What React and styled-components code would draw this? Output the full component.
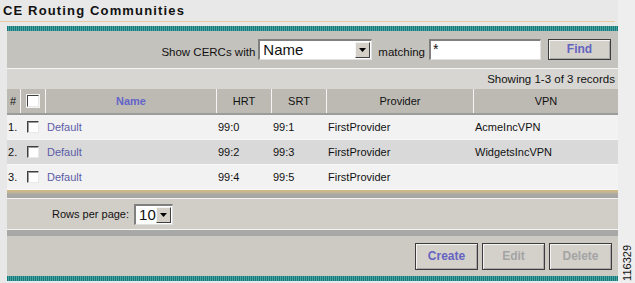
import styled, { createGlobalStyle } from "styled-components";

const GlobalStyle = createGlobalStyle`
  html, body {
    margin: 0;
    padding: 0;
    background: #e8e8e8;
  }
  body {
    font-family: "Liberation Sans", Arial, sans-serif;
    font-size: 11px;
    color: #000;
  }
`;

const rows = [
  { id: 1, name: "Default", hrt: "99:0", srt: "99:1", provider: "FirstProvider", vpn: "AcmeIncVPN" },
  { id: 2, name: "Default", hrt: "99:2", srt: "99:3", provider: "FirstProvider", vpn: "WidgetsIncVPN" },
  { id: 3, name: "Default", hrt: "99:4", srt: "99:5", provider: "FirstProvider", vpn: "" },
];

const columns = "13px 24px 170px 54px 54px 146px 144px";

function App() {
  return (
    <>
      <GlobalStyle />
      <Page>
        <Main>
          <TitleBar>
            <h1>CE Routing Communities</h1>
          </TitleBar>
          <Panel>
            <TealBar />
            <FilterRow>
              <span>Show CERCs with</span>
              <FakeSelect $width={114} $size={15}>
                <span>Name</span>
                <ArrowButton />
              </FakeSelect>
              <span className="matching">matching</span>
              <TextBox>*</TextBox>
              <Button $tone="primary" $width={63} $height={21}>
                Find
              </Button>
            </FilterRow>
            <InfoRow>Showing 1-3 of 3 records</InfoRow>
            <HeaderRow>
              <HeadCell>#</HeadCell>
              <HeadCell $center>
                <CheckBox $header />
              </HeadCell>
              <HeadCell $center $link>
                Name
              </HeadCell>
              <HeadCell $center>HRT</HeadCell>
              <HeadCell $center>SRT</HeadCell>
              <HeadCell $center>Provider</HeadCell>
              <HeadCell $center>VPN</HeadCell>
            </HeaderRow>
            {rows.map((r, i) => (
              <DataRow key={r.id} $alt={i % 2 === 1}>
                <Cell>{r.id}.</Cell>
                <Cell $center>
                  <CheckBox />
                </Cell>
                <Cell>
                  <NameLink>{r.name}</NameLink>
                </Cell>
                <Cell>{r.hrt}</Cell>
                <Cell>{r.srt}</Cell>
                <Cell>{r.provider}</Cell>
                <Cell>{r.vpn}</Cell>
              </DataRow>
            ))}
            <TanBar />
            <PagingRow>
              <span>Rows per page:</span>
              <FakeSelect $width={39} $size={15}>
                <span>10</span>
                <ArrowButton />
              </FakeSelect>
            </PagingRow>
            <GrayBar />
            <ActionRow>
              <Button $tone="primary" $width={63} $height={27}>
                Create
              </Button>
              <Button $width={63} $height={27}>
                Edit
              </Button>
              <Button $width={63} $height={27}>
                Delete
              </Button>
            </ActionRow>
            <TealBar />
          </Panel>
        </Main>
        <Side>
          <FigureNumber>116329</FigureNumber>
        </Side>
      </Page>
    </>
  );
}

function ArrowButton() {
  return (
    <Arrow>
      <svg width="7" height="4" viewBox="0 0 7 4">
        <path d="M0 0h7L3.5 4z" fill="#000" />
      </svg>
    </Arrow>
  );
}

const Page = styled.div`
  display: flex;
  width: 635px;
  height: 283px;
  overflow: hidden;
`;

const Main = styled.div`
  width: 618px;
  display: flex;
  flex-direction: column;
`;

const TitleBar = styled.div`
  height: 21px;
  border-bottom: 1px solid #e8c9a0;
  margin-bottom: 4px;
  width: 615px;
  h1 {
    margin: 0;
    padding: 3px 0 0 3px;
    font-family: "Liberation Sans", Arial, sans-serif;
    font-size: 13px;
    font-weight: bold;
    letter-spacing: 1.15px;
    line-height: 16px;
    color: #111;
  }
`;

const Panel = styled.div`
  margin-left: 7px;
  width: 611px;
  display: flex;
  flex-direction: column;
  background: #d3d0ca;
`;

const TealBar = styled.div`
  height: 5px;
  background: repeating-linear-gradient(
    90deg,
    #16797b 0px,
    #16797b 1px,
    #4aa3a3 1px,
    #4aa3a3 2px
  );
`;

const FilterRow = styled.div`
  height: 36px;
  background: #c4c2bd;
  border-bottom: 1px solid #f4f4f4;
  display: flex;
  align-items: center;
  justify-content: flex-end;
  padding: 0 7px 1px 0;
  font-size: 11.5px;
  color: #111;
  & > span {
    padding-top: 5px;
  }
  & > span:first-child {
    margin-right: 3px;
  }
  .matching {
    margin: 0 4px 0 6px;
  }
`;

const FakeSelect = styled.div`
  width: ${(p) => p.$width}px;
  height: 21px;
  box-sizing: border-box;
  background: #fff;
  border-top: 2px solid #808080;
  border-left: 2px solid #808080;
  border-right: 1px solid #e0e0e0;
  border-bottom: 1px solid #e0e0e0;
  display: flex;
  align-items: center;
  justify-content: space-between;
  font-size: ${(p) => p.$size}px;
  padding-left: 3px;
  & > span {
    line-height: 16px;
  }
`;

const Arrow = styled.div`
  width: 15px;
  height: 16px;
  margin-right: 1px;
  box-sizing: border-box;
  background: #d4d0c8;
  border-top: 1px solid #f4f4f4;
  border-left: 1px solid #f4f4f4;
  border-right: 1px solid #404040;
  border-bottom: 1px solid #404040;
  display: flex;
  align-items: center;
  justify-content: center;
`;

const TextBox = styled.div`
  width: 112px;
  height: 21px;
  box-sizing: border-box;
  background: #fff;
  border-top: 2px solid #808080;
  border-left: 2px solid #808080;
  border-right: 1px solid #e0e0e0;
  border-bottom: 1px solid #e0e0e0;
  font-size: 14px;
  line-height: 16px;
  padding-left: 2px;
  margin-right: 7px;
`;

const Button = styled.div`
  width: ${(p) => p.$width}px;
  height: ${(p) => p.$height}px;
  box-sizing: border-box;
  background: #d4d1cb;
  border: 1px solid #3c3c3c;
  box-shadow: inset 1px 1px 0 #f4f4f4, inset -1px -1px 0 #a8a8a8;
  display: flex;
  align-items: center;
  justify-content: center;
  font-size: 12px;
  font-weight: bold;
  color: ${(p) => (p.$tone === "primary" ? "#6464c0" : "#a4a4a4")};
`;

const InfoRow = styled.div`
  height: 20px;
  background: #d8d6d2;
  display: flex;
  align-items: center;
  justify-content: flex-end;
  padding-right: 3px;
  font-size: 11.5px;
  color: #111;
`;

const HeaderRow = styled.div`
  display: grid;
  grid-template-columns: ${columns};
  column-gap: 1px;
  height: 26px;
  background: #f4f4f4;
  border-bottom: 2px solid #9c9c9c;
  box-sizing: border-box;
`;

const HeadCell = styled.div`
  background: #bdbab4;
  display: flex;
  align-items: center;
  justify-content: ${(p) => (p.$center ? "center" : "flex-start")};
  padding-left: ${(p) => (p.$center ? 0 : 3)}px;
  font-size: 11px;
  color: ${(p) => (p.$link ? "#6464c8" : "#111")};
  font-weight: ${(p) => (p.$link ? "bold" : "normal")};
`;

const DataRow = styled.div`
  display: grid;
  grid-template-columns: ${columns};
  column-gap: 1px;
  height: 25px;
  box-sizing: border-box;
  border-bottom: 1px solid #f8f8f8;
  background: ${(p) => (p.$alt ? "#d9d9d9" : "#f2f2f2")};
`;

const Cell = styled.div`
  display: flex;
  align-items: center;
  justify-content: ${(p) => (p.$center ? "center" : "flex-start")};
  padding-left: ${(p) => (p.$center ? 0 : 1)}px;
  font-size: 11px;
  color: #111;
  white-space: nowrap;
`;

const NameLink = styled.span`
  color: #5c5ca8;
`;

const CheckBox = styled.span`
  display: block;
  width: 12px;
  height: 12px;
  box-sizing: border-box;
  background: #fff;
  border-top: 1px solid #404040;
  border-left: 1px solid #404040;
  border-right: 1px solid #e8e8e8;
  border-bottom: 1px solid #e8e8e8;
  box-shadow: ${(p) => (p.$header ? "0 0 0 1px #f4f4f4" : "inset 1px 1px 0 #9c9c9c")};
`;

const TanBar = styled.div`
  height: 8px;
  background: linear-gradient(180deg, #d0b880 0px, #c8b892 2px, #aaa8a4 4px, #a4a4a4 8px);
  border-bottom: 1px solid #f4f4f4;
`;

const PagingRow = styled.div`
  height: 31px;
  background: #d1cec7;
  display: flex;
  align-items: center;
  padding-left: 45px;
  gap: 5px;
  font-size: 11px;
  color: #111;
  box-sizing: border-box;
  border-bottom: 1px solid #f4f4f4;
`;

const GrayBar = styled.div`
  height: 6px;
  background: #a8a8a6;
`;

const ActionRow = styled.div`
  height: 40px;
  background: #cdcac4;
  display: flex;
  align-items: center;
  justify-content: flex-end;
  gap: 4px;
  padding: 0 6px 0 0;
  box-sizing: border-box;
`;

const Side = styled.div`
  flex: 1;
  display: flex;
  flex-direction: column;
  justify-content: flex-end;
  align-items: center;
  padding-bottom: 2px;
  background: #eeeeee;
`;

const FigureNumber = styled.div`
  writing-mode: vertical-rl;
  transform: rotate(180deg);
  font-family: "Liberation Sans", Arial, sans-serif;
  font-size: 11px;
  color: #111;
`;

export default App;
